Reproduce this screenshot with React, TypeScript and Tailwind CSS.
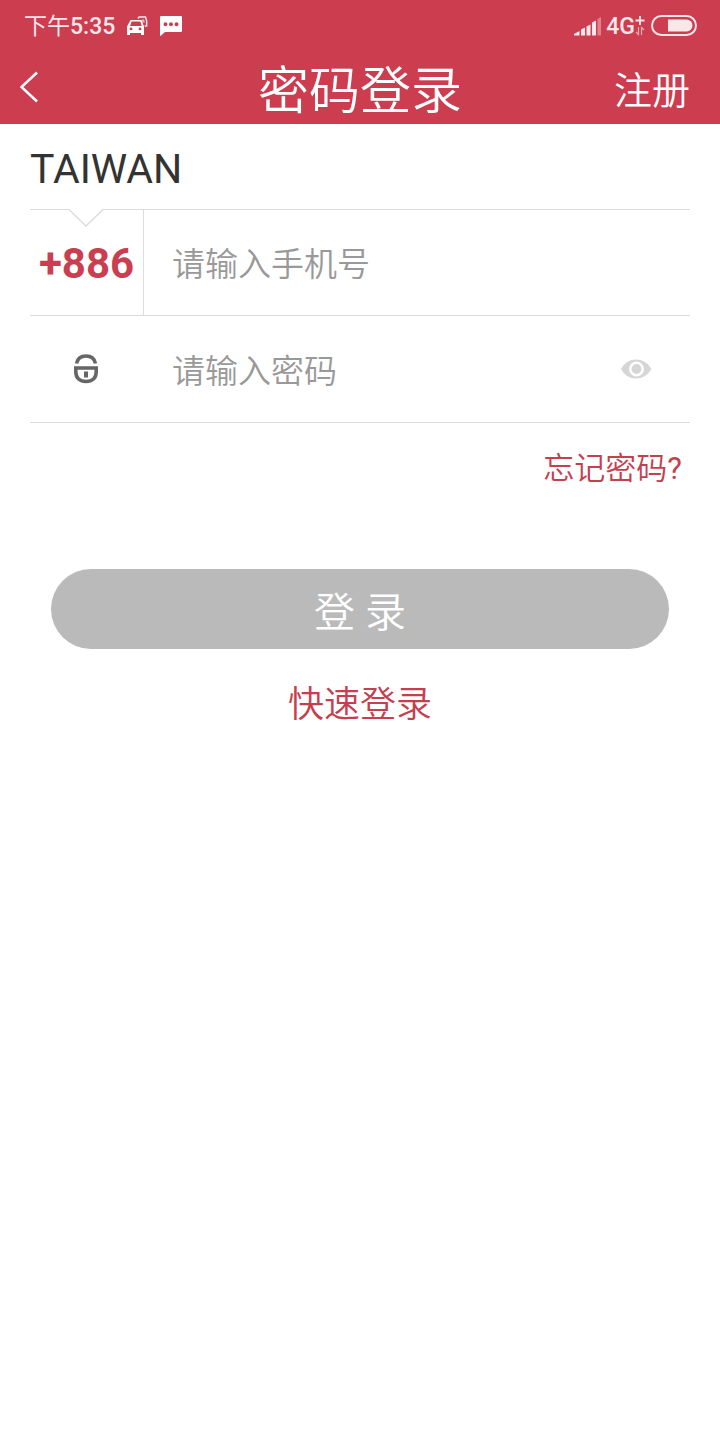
import { useState } from "react";

function CarIcon() {
  return (
    <svg width="22" height="20" viewBox="0 0 22 20" fill="none" aria-hidden="true">
      <path
        fill="#fff"
        fillRule="evenodd"
        d="M4.500 4h11l2.500 6.500v8.500h-3v-2H4v2H1v-8.500zM5.700 5.500L4 10h11.800l-1.500-4.500zM5 11.500a1.400 1.400 0 1 0 0 2.800a1.400 1.400 0 0 0 0-2.800zM14 11.500a1.400 1.400 0 1 0 0 2.800a1.400 1.400 0 0 0 0-2.800z"
      />
      <path d="M12 2.500l1-1.500h6.500l1.200 4v5h-2" stroke="#fbe6ea" strokeWidth="1.400" />
      <path d="M15.500 3.500h2.500l1 3h-2.500z" fill="#fbe6ea" opacity=".7" />
    </svg>
  );
}

function MessageIcon() {
  return (
    <svg width="24" height="22" viewBox="0 0 24 22" aria-hidden="true">
      <path
        fill="#fff"
        fillRule="evenodd"
        d="M2 1h20q1 0 1 1v14q0 1-1 1H6l-4.500 4q-.5 0-.5-1V2q0-1 1-1zM6.500 7.200a2 2 0 1 0 0 4a2 2 0 0 0 0-4zM12 7.200a2 2 0 1 0 0 4a2 2 0 0 0 0-4zM17.500 7.200a2 2 0 1 0 0 4a2 2 0 0 0 0-4z"
      />
    </svg>
  );
}

function SignalIcon() {
  return (
    <svg width="28" height="20" viewBox="0 0 28 20" fill="#fbe6ea" aria-hidden="true">
      <path d="M0 19.500v-1.500l5.500-3v4.500zM7 19.500v-6l4-2v8zM12.500 19.500v-9l4-2v11zM18 19.500v-13l4-2v15z" />
      <path d="M23.500 19.500V3l3.500-2v18.500z" opacity=".4" />
    </svg>
  );
}

function DataIcon() {
  return (
    <svg width="10" height="20" viewBox="0 0 10 20" fill="none" stroke="#fbe6ea" aria-hidden="true">
      <path d="M5 0v9M.5 4.500h9" strokeWidth="1.800" />
      <path d="M3.500 11v7.500L1 16M6.500 19v-7.500L9 14" strokeWidth="1.200" opacity=".65" />
    </svg>
  );
}

function BatteryIcon() {
  return (
    <svg width="46" height="22" viewBox="0 0 46 22" aria-hidden="true">
      <rect x="1" y="1" width="44" height="19" rx="9.500" fill="none" stroke="#fbe6ea" strokeWidth="2" />
      <path d="M17 4.500h18.500a6 6 0 0 1 0 12H17z" fill="#fbe6ea" />
    </svg>
  );
}

function LockIcon() {
  return (
    <svg width="26" height="30" viewBox="0 0 26 30" fill="none" stroke="#666" aria-hidden="true">
      <path d="M3.500 9.500C4.500 4.500 8 2 13 2s8.500 2.500 9.500 7.500" strokeWidth="3.600" />
      <path d="M2.800 14h20.400v4c0 6-4 9.500-10.200 9.500S2.800 24 2.800 18z" strokeWidth="3.600" />
      <path d="M13 17.500v6" strokeWidth="4" />
    </svg>
  );
}

function EyeIcon() {
  return (
    <svg width="32" height="20" viewBox="0 0 32 20" aria-hidden="true">
      <path d="M1 10Q6 .5 16 .5T31.500 10Q26 19.500 16 19.500T1 10z" fill="#d6d6d6" />
      <circle cx="16.500" cy="10" r="6.200" fill="#d6d6d6" stroke="#fff" strokeWidth="2.600" />
    </svg>
  );
}

export default function App() {
  const [phone, setPhone] = useState("");
  const [password, setPassword] = useState("");
  const [visible, setVisible] = useState(false);

  return (
    <div className="min-h-screen bg-white font-['Roboto','Noto_Sans_CJK_SC',sans-serif] text-[#333]">
      <header className="bg-[#cb3d4f] text-white">
        <div className="flex h-[50px] items-center justify-between pt-0.5 pr-[23px] pl-6">
          <div className="flex items-center gap-[11px]">
            <span className="pt-0.5 text-[23px] leading-8 font-medium text-[#fbe6ea]">
              <span className="font-normal">下午</span>5:35
            </span>
            <CarIcon />
            <MessageIcon />
          </div>
          <div className="flex items-center">
            <SignalIcon />
            <span className="pt-0.5 pl-1 text-[23px] leading-8 font-medium text-[#fbe6ea]">4G</span>
            <DataIcon />
            <span className="pl-1.5">
              <BatteryIcon />
            </span>
          </div>
        </div>
        <div className="grid h-[74px] grid-cols-[1fr_auto_1fr] items-center">
          <button type="button" aria-label="返回" className="justify-self-start p-5">
            <svg width="18" height="32" viewBox="0 0 18 32" fill="none" stroke="#fff" strokeWidth="2.500" aria-hidden="true">
              <path d="M17 1.500L1.500 16L17 30.500" />
            </svg>
          </button>
          <h1 className="pt-2.5 text-[51px] leading-[64px] font-[350]">密码登录</h1>
          <a href="#register" className="justify-self-end pt-2 pr-[30px] text-[38px] leading-[64px] font-[350]">
            注册
          </a>
        </div>
      </header>

      <main className="px-[30px]">
        <form onSubmit={(e) => e.preventDefault()}>
          <p className="flex h-[85px] items-center pt-1.5 text-[41px] leading-none">TAIWAN</p>

          <div className="relative flex h-[107px] border-y border-[#dcdcdc]">
            <svg className="absolute -top-px left-[39px]" width="34" height="18" viewBox="0 0 34 18" aria-hidden="true">
              <path d="M0 0h34L17 17z" fill="#fff" />
              <path d="M0 .5L17 17L34 .5" fill="none" stroke="#dcdcdc" strokeWidth="1.300" />
            </svg>
            <button
              type="button"
              aria-label="国家代码 +886"
              className="w-[114px] border-r border-[#dcdcdc] pt-0.5 text-[42px] font-bold text-[#c93f51]"
            >
              +886
            </button>
            <input
              type="tel"
              aria-label="手机号"
              placeholder="请输入手机号"
              value={phone}
              onChange={(e) => setPhone(e.target.value)}
              className="min-w-0 flex-1 pt-1 pl-7 text-[33px] font-[350] outline-none placeholder:text-[#999]"
            />
          </div>

          <div className="flex h-[107px] items-center border-b border-[#dcdcdc]">
            <span className="flex w-[112px] justify-center">
              <LockIcon />
            </span>
            <input
              type={visible ? "text" : "password"}
              aria-label="密码"
              placeholder="请输入密码"
              value={password}
              onChange={(e) => setPassword(e.target.value)}
              className="h-full min-w-0 flex-1 pt-1 pl-[30px] text-[33px] font-[350] outline-none placeholder:text-[#999]"
            />
            <button type="button" aria-label="显示密码" onClick={() => setVisible(!visible)} className="px-[38px] py-4">
              <EyeIcon />
            </button>
          </div>

          <div className="flex justify-end pt-[22px] pr-2">
            <a href="#forgot" className="text-[31px] leading-[48px] font-[350] text-[#c4404f]">
              忘记密码<span className="font-normal">?</span>
            </a>
          </div>

          <div className="px-[21px] pt-[76px]">
            <button
              type="submit"
              className="flex h-20 w-full items-center justify-center rounded-full bg-[#bababa] pt-2.5 text-[41px] font-[350] text-white"
            >
              登 录
            </button>
          </div>

          <div className="flex justify-center pt-[30px]">
            <a href="#quick" className="text-[36px] leading-[52px] font-[350] text-[#c4404f]">
              快速登录
            </a>
          </div>
        </form>
      </main>
    </div>
  );
}
